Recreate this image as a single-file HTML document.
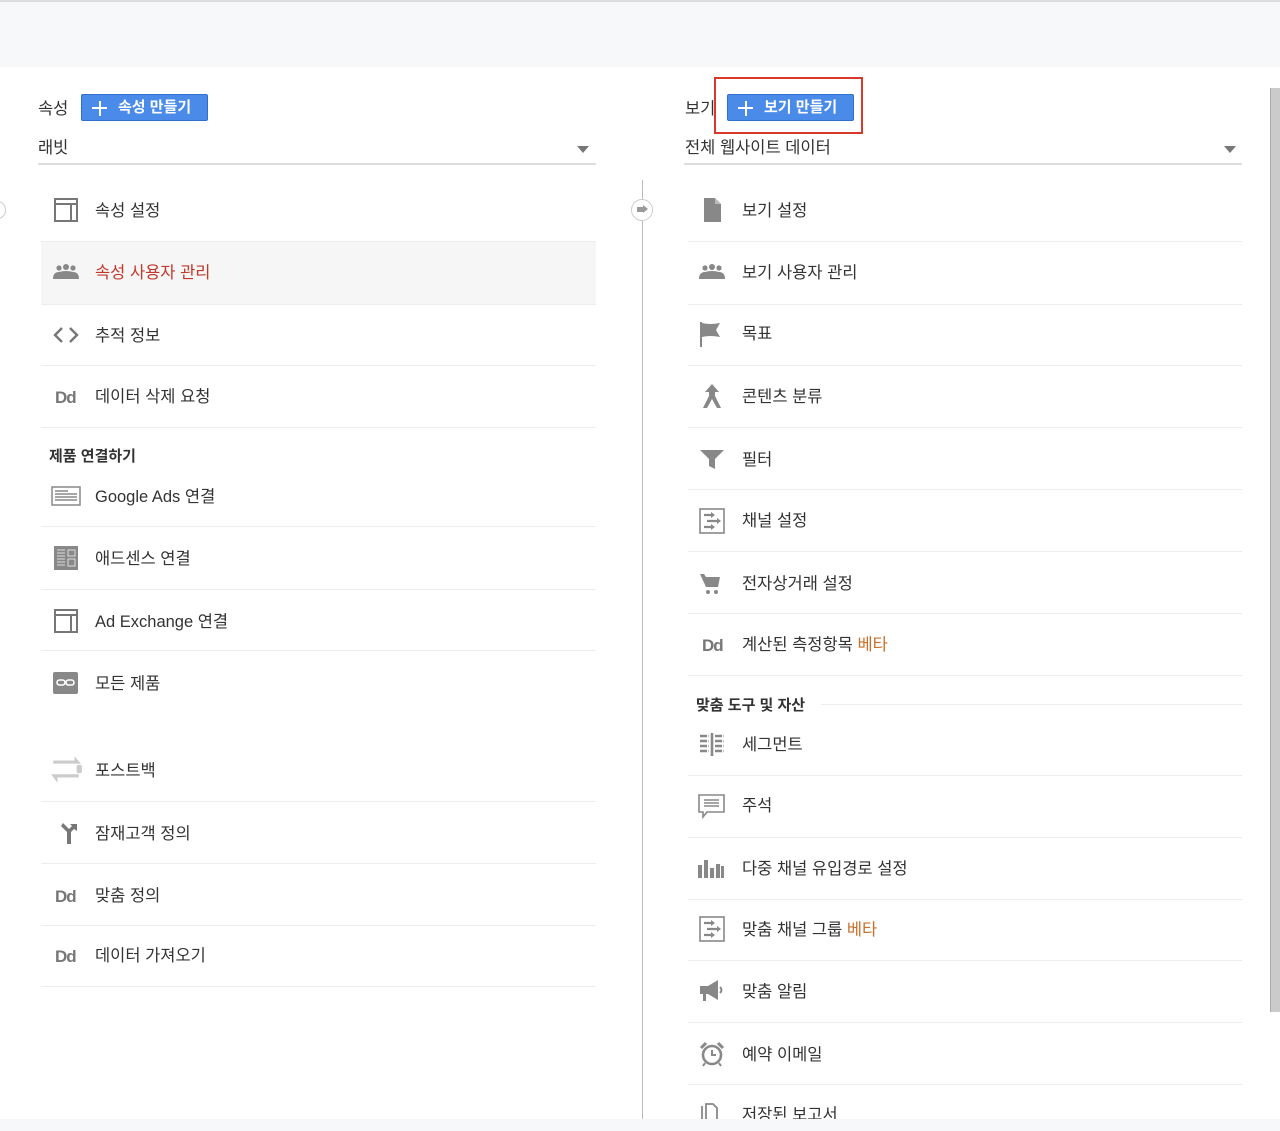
<!DOCTYPE html>
<html><head><meta charset="utf-8">
<style>
*{margin:0;padding:0;box-sizing:border-box}
body{width:1280px;height:1131px;background:#fff;position:relative;overflow:hidden;font-family:"Liberation Sans","Noto Sans CJK KR",sans-serif;color:#333}
.top{position:absolute;left:0;top:0;width:1280px;height:67px;background:#f7f8fa;border-top:2px solid #dcdde0}
.bot{position:absolute;left:0;top:1119px;width:1280px;height:12px;background:#f7f8fa}
.t{position:absolute;font-size:16.5px;line-height:22px;white-space:nowrap;color:#333;margin-top:2px}
.sep{position:absolute;height:1px;background:#ececec}
.ic{position:absolute;width:28px;height:28px}
.beta{color:#c8702a}
.btn{position:absolute;height:27px;background:#4a8ae8;border:1px solid #2f6fd0;border-radius:2px;color:#fff;font-size:15px;font-weight:bold;line-height:25px;padding-left:36px}
.btn:before{content:"";position:absolute;left:10px;top:12px;width:15px;height:2px;background:#fff}
.btn:after{content:"";position:absolute;left:16.5px;top:5.5px;width:2px;height:15px;background:#fff}
.dd{position:absolute;height:2px;background:#ddd}
.tri{position:absolute;width:0;height:0;border-left:6px solid transparent;border-right:6px solid transparent;border-top:7px solid #777}
.dd2{font-weight:bold;color:#777;font-size:17px;letter-spacing:-1px}
</style></head><body>
<div class="top"></div>
<div class="bot"></div>
<div style="position:absolute;left:1270px;top:88px;width:10px;height:924px;background:#cbcbcb;border-left:1px solid #aaa"></div>

<div class="t" style="left:38px;top:96px">속성</div>
<div class="btn" style="left:81px;top:94px;width:127px">속성 만들기</div>
<div class="t" style="left:38px;top:135px">래빗</div>
<div class="tri" style="left:577px;top:146px"></div>
<div class="dd" style="left:38px;top:163px;width:558px"></div>
<div style="position:absolute;left:-10px;top:201px;width:16px;height:18px;border:1.5px solid #ccc;border-radius:50%"></div>

<div class="t" style="left:685px;top:96px">보기</div>
<div class="btn" style="left:727px;top:94px;width:127px">보기 만들기</div>
<div style="position:absolute;left:714px;top:77px;width:149px;height:57px;border:2px solid #d83a2a"></div>
<div class="t" style="left:685px;top:135px">전체 웹사이트 데이터</div>
<div class="tri" style="left:1224px;top:146px"></div>
<div class="dd" style="left:684px;top:163px;width:558px"></div>

<div style="position:absolute;left:642px;top:180px;width:1px;height:940px;background:#bbb"></div>
<div style="position:absolute;left:631px;top:199px;width:22px;height:22px;border:1.5px solid #ccc;border-radius:50%;background:#fff"></div>
<div style="position:absolute;left:637px;top:207px;width:6px;height:5px;background:#999"></div>
<div style="position:absolute;left:643px;top:205px;width:0;height:0;border-top:4.5px solid transparent;border-bottom:4.5px solid transparent;border-left:5px solid #999"></div>

<div style="position:absolute;left:41px;top:242px;width:555px;height:62px;background:#f6f6f6"></div>

<svg class="ic" style="left:52px;top:196px" viewBox="0 0 28 28"><rect x="3" y="3" width="22" height="22" fill="none" stroke="#777" stroke-width="2"/><path d="M3 8H25M19 8V25" stroke="#777" stroke-width="2"/></svg>
<div class="t" style="left:95px;top:198px">속성 설정</div>
<div class="sep" style="left:41px;top:241px;width:555px"></div>

<svg class="ic" style="left:52px;top:258px" viewBox="0 0 28 28"><circle cx="7" cy="10" r="2.6" fill="#888"/><circle cx="14" cy="9" r="3" fill="#888"/><circle cx="21" cy="10" r="2.6" fill="#888"/><path d="M1 21Q1 14 7 14Q14 12 21 14Q27 14 27 21Z" fill="#888"/></svg>
<div class="t" style="left:95px;top:260px;color:#c0392b">속성 사용자 관리</div>
<div class="sep" style="left:41px;top:304px;width:555px"></div>

<svg class="ic" style="left:52px;top:321px" viewBox="0 0 28 28"><path d="M10 7L3 14L10 21M18 7L25 14L18 21" fill="none" stroke="#777" stroke-width="2.4"/></svg>
<div class="t" style="left:95px;top:323px">추적 정보</div>
<div class="sep" style="left:41px;top:365px;width:555px"></div>

<div class="t dd2" style="left:55px;top:385px">Dd</div>
<div class="t" style="left:95px;top:384px">데이터 삭제 요청</div>
<div class="sep" style="left:41px;top:427px;width:555px"></div>

<div class="t" style="left:49px;top:444px;font-size:15px;font-weight:bold;color:#333">제품 연결하기</div>

<svg class="ic" style="left:51px;top:482px;width:30px" viewBox="0 0 30 28"><rect x="1" y="5" width="28" height="18" fill="none" stroke="#888" stroke-width="1.5"/><path d="M4 9H17M4 12H26M4 15H26M4 18H26" stroke="#888" stroke-width="1.5"/></svg>
<div class="t" style="left:95px;top:484px">Google Ads 연결</div>
<div class="sep" style="left:41px;top:526px;width:555px"></div>

<svg class="ic" style="left:52px;top:544px" viewBox="0 0 28 28"><rect x="2" y="2" width="24" height="24" fill="#888"/><path d="M5 6H13M5 9H13M5 12H13M5 15H13M5 18H13M5 21H13M16 6H23V12H16ZM16 15H23V22H16Z" stroke="#ddd" stroke-width="1" fill="none"/></svg>
<div class="t" style="left:95px;top:546px">애드센스 연결</div>
<div class="sep" style="left:41px;top:589px;width:555px"></div>

<svg class="ic" style="left:52px;top:607px" viewBox="0 0 28 28"><rect x="3" y="3" width="22" height="22" fill="none" stroke="#777" stroke-width="2"/><path d="M3 8H25M19 8V25" stroke="#777" stroke-width="2"/></svg>
<div class="t" style="left:95px;top:609px">Ad Exchange 연결</div>
<div class="sep" style="left:41px;top:650px;width:555px"></div>

<svg class="ic" style="left:52px;top:669px" viewBox="0 0 28 28"><rect x="1" y="3" width="25" height="22" rx="2" fill="#888"/><rect x="5" y="11" width="8" height="5" rx="2.5" fill="none" stroke="#fff" stroke-width="1.6"/><rect x="14" y="11" width="8" height="5" rx="2.5" fill="none" stroke="#fff" stroke-width="1.6"/></svg>
<div class="t" style="left:95px;top:671px">모든 제품</div>

<svg class="ic" style="left:49px;top:753px;width:34px;height:34px" viewBox="0 0 32 32"><path d="M4 7H24V3L30 10H4Z" fill="#ccc"/><path d="M28 23H8V28L2 20H28Z" fill="#ccc"/><rect x="26" y="11" width="5" height="8" rx="2" fill="#ccc"/></svg>
<div class="t" style="left:95px;top:758px">포스트백</div>
<div class="sep" style="left:41px;top:801px;width:555px"></div>

<svg class="ic" style="left:52px;top:819px" viewBox="0 0 28 28"><path d="M3 4H11L9 7L15 13V25H19V13L22 10L25 12V5H18L20 7L17 10L14 7L11 4Z" fill="#777"/></svg>
<div class="t" style="left:95px;top:821px">잠재고객 정의</div>
<div class="sep" style="left:41px;top:863px;width:555px"></div>

<div class="t dd2" style="left:55px;top:884px">Dd</div>
<div class="t" style="left:95px;top:883px">맞춤 정의</div>
<div class="sep" style="left:41px;top:925px;width:555px"></div>

<div class="t dd2" style="left:55px;top:944px">Dd</div>
<div class="t" style="left:95px;top:943px">데이터 가져오기</div>
<div class="sep" style="left:41px;top:986px;width:555px"></div>

<svg class="ic" style="left:698px;top:196px" viewBox="0 0 28 28"><path d="M6 2H17L23 8V26H6Z" fill="#888"/><path d="M17 2V8H23" fill="#bbb"/></svg>
<div class="t" style="left:742px;top:198px">보기 설정</div>
<div class="sep" style="left:688px;top:241px;width:554px"></div>

<svg class="ic" style="left:698px;top:258px" viewBox="0 0 28 28"><circle cx="7" cy="10" r="2.6" fill="#888"/><circle cx="14" cy="9" r="3" fill="#888"/><circle cx="21" cy="10" r="2.6" fill="#888"/><path d="M1 21Q1 14 7 14Q14 12 21 14Q27 14 27 21Z" fill="#888"/></svg>
<div class="t" style="left:742px;top:260px">보기 사용자 관리</div>
<div class="sep" style="left:688px;top:304px;width:554px"></div>

<svg class="ic" style="left:698px;top:319px" viewBox="0 0 28 28"><path d="M3 3V28" stroke="#888" stroke-width="2"/><path d="M4 4Q12 6 22 4L18 11L22 18Q12 16 4 18Z" fill="#888"/></svg>
<div class="t" style="left:742px;top:321px">목표</div>
<div class="sep" style="left:688px;top:365px;width:554px"></div>

<svg class="ic" style="left:698px;top:382px" viewBox="0 0 28 28"><path d="M14 2L7 10H11V14L5 26H9L14 17L19 26H23L17 14V10H21Z" fill="#888"/></svg>
<div class="t" style="left:742px;top:384px">콘텐츠 분류</div>
<div class="sep" style="left:688px;top:427px;width:554px"></div>

<svg class="ic" style="left:698px;top:445px" viewBox="0 0 28 28"><path d="M2 5H26L17 14V24L11 21V14Z" fill="#888"/></svg>
<div class="t" style="left:742px;top:447px">필터</div>
<div class="sep" style="left:688px;top:489px;width:554px"></div>

<svg class="ic" style="left:698px;top:507px" viewBox="0 0 28 28"><rect x="2" y="2" width="24" height="24" fill="none" stroke="#888" stroke-width="1.6"/><path d="M6 8H13M9 14H19M6 20H13" stroke="#888" stroke-width="2.2"/><path d="M13 5L17 8L13 11ZM19 11L23 14L19 17ZM13 17L17 20L13 23Z" fill="#888"/></svg>
<div class="t" style="left:742px;top:508px">채널 설정</div>
<div class="sep" style="left:688px;top:551px;width:554px"></div>

<svg class="ic" style="left:698px;top:569px" viewBox="0 0 28 28"><path d="M2 5H6L8 8H22L20 18H8Z" fill="#888"/><circle cx="10" cy="23" r="2" fill="#888"/><circle cx="18" cy="23" r="2" fill="#888"/></svg>
<div class="t" style="left:742px;top:571px">전자상거래 설정</div>
<div class="sep" style="left:688px;top:613px;width:554px"></div>

<div class="t dd2" style="left:702px;top:633px">Dd</div>
<div class="t" style="left:742px;top:632px">계산된 측정항목 <span class="beta">베타</span></div>
<div class="sep" style="left:688px;top:675px;width:554px"></div>

<div class="t" style="left:696px;top:693px;font-size:15px;font-weight:bold">맞춤 도구 및 자산</div>
<div class="sep" style="left:821px;top:704px;width:421px"></div>

<svg class="ic" style="left:698px;top:730px" viewBox="0 0 28 28"><path d="M2 6H11M2 11H11M2 16H11M2 21H11M17 6H26M17 11H26M17 16H26M17 21H26" stroke="#888" stroke-width="2.4" stroke-dasharray="7 1.5"/><path d="M14 3V26" stroke="#888" stroke-width="2.6"/></svg>
<div class="t" style="left:742px;top:732px">세그먼트</div>
<div class="sep" style="left:688px;top:775px;width:554px"></div>

<svg class="ic" style="left:698px;top:792px" viewBox="0 0 28 28"><path d="M1 3H26V20H9L5 25V20H1Z" fill="none" stroke="#888" stroke-width="1.6"/><path d="M6 8H21M6 11H21M6 14H21" stroke="#888" stroke-width="1.5"/></svg>
<div class="t" style="left:742px;top:793px">주석</div>
<div class="sep" style="left:688px;top:837px;width:554px"></div>

<svg class="ic" style="left:697px;top:854px" viewBox="0 0 28 28"><path d="M1 11H5V24H1ZM7 6H11V24H7ZM13 14H17V24H13ZM19 10H23V24H19ZM24 12H27V24H24Z" fill="#888"/></svg>
<div class="t" style="left:742px;top:856px">다중 채널 유입경로 설정</div>
<div class="sep" style="left:688px;top:899px;width:554px"></div>

<svg class="ic" style="left:698px;top:915px" viewBox="0 0 28 28"><rect x="2" y="2" width="24" height="24" fill="none" stroke="#888" stroke-width="1.6"/><path d="M6 8H13M9 14H19M6 20H13" stroke="#888" stroke-width="2.2"/><path d="M13 5L17 8L13 11ZM19 11L23 14L19 17ZM13 17L17 20L13 23Z" fill="#888"/></svg>
<div class="t" style="left:742px;top:917px">맞춤 채널 그룹 <span class="beta">베타</span></div>
<div class="sep" style="left:688px;top:960px;width:554px"></div>

<svg class="ic" style="left:698px;top:977px" viewBox="0 0 28 28"><path d="M2 9H10L20 3V23L10 17H8V24H5V17H2Z" fill="#888"/><path d="M22 10Q25 13 22 16" stroke="#888" stroke-width="2" fill="none"/></svg>
<div class="t" style="left:742px;top:979px">맞춤 알림</div>
<div class="sep" style="left:688px;top:1022px;width:554px"></div>

<svg class="ic" style="left:698px;top:1040px" viewBox="0 0 28 28"><circle cx="14" cy="15" r="9" fill="none" stroke="#888" stroke-width="2.6"/><path d="M14 10V15H18" stroke="#888" stroke-width="2" fill="none"/><path d="M3 8L8 3M25 8L20 3" stroke="#888" stroke-width="3"/><path d="M7 23L5 26M21 23L23 26" stroke="#888" stroke-width="2"/></svg>
<div class="t" style="left:742px;top:1042px">예약 이메일</div>
<div class="sep" style="left:688px;top:1084px;width:554px"></div>

<svg class="ic" style="left:698px;top:1100px" viewBox="0 0 28 28"><path d="M4 6V28M8 28V4H15L19 8V28" fill="none" stroke="#888" stroke-width="1.8"/></svg>
<div class="t" style="left:742px;top:1102px">저장된 보고서</div>
<div class="bot" style="top:1119px"></div>
</body></html>
